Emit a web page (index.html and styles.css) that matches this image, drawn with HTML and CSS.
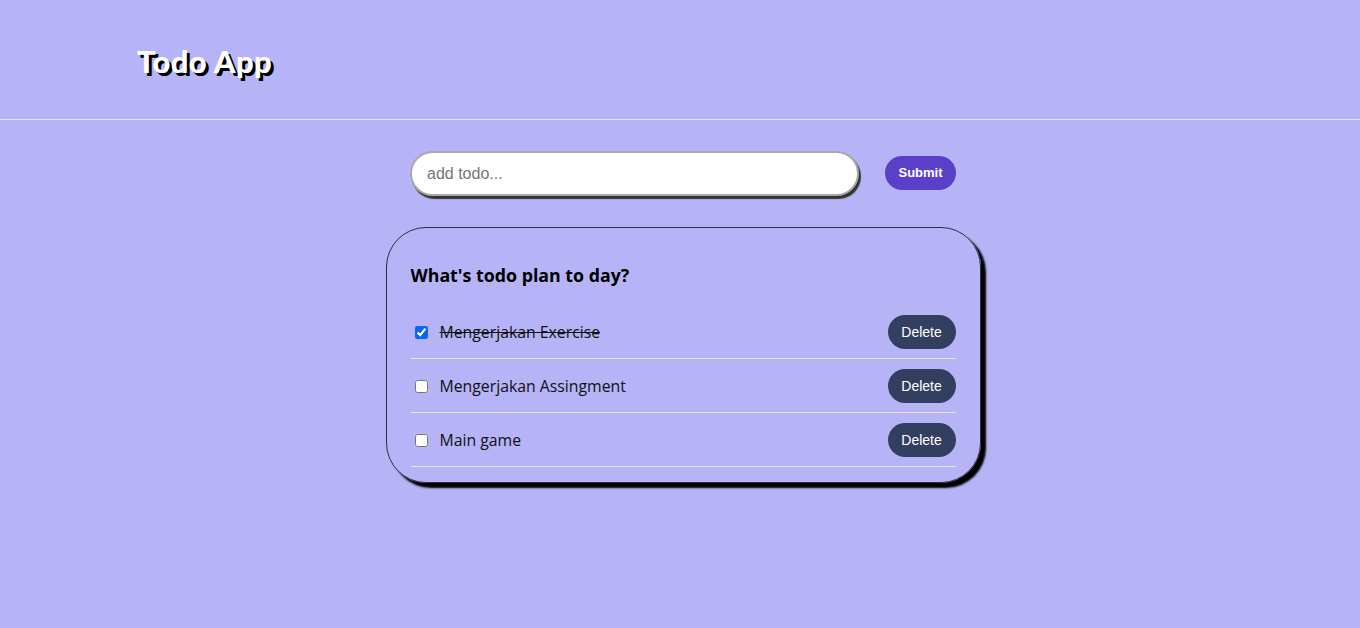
FILE: index.html
```html
<!DOCTYPE html>
<html>
<head>
<meta charset="utf-8">
<link rel="stylesheet" href="styles.css">
</head>
<body>
<header class="header">
  <h1 class="title">Todo App</h1>
</header>
<main class="main">
  <form class="add-form">
    <input class="add-input" type="text" placeholder="add todo...">
    <button class="submit-btn" type="button">Submit</button>
  </form>
  <section class="card">
    <h2 class="card-title">What's todo plan to day?</h2>
    <ul class="todo-list">
      <li class="todo-item">
        <input class="todo-check" type="checkbox" checked>
        <span class="todo-text done">Mengerjakan Exercise</span>
        <button class="delete-btn" type="button">Delete</button>
      </li>
      <li class="todo-item">
        <input class="todo-check" type="checkbox">
        <span class="todo-text">Mengerjakan Assingment</span>
        <button class="delete-btn" type="button">Delete</button>
      </li>
      <li class="todo-item">
        <input class="todo-check" type="checkbox">
        <span class="todo-text">Main game</span>
        <button class="delete-btn" type="button">Delete</button>
      </li>
    </ul>
  </section>
</main>
</body>
</html>
```
FILE: styles.css
```css
html, body {
  margin: 0;
  padding: 0;
  background: #b6b3f6;
  height: 100%;
}
body {
  font-family: "Open Sans", "Noto Sans", sans-serif;
  color: #111;
}
.header {
  height: 120px;
  border-bottom: 1px solid #e4e2f0;
  display: flex;
  align-items: center;
  padding-left: 137px;
  box-sizing: border-box;
}
.title {
  margin: 0;
  font-family: Lato, sans-serif;
  font-weight: 900;
  font-size: 31px;
  color: #fff;
  text-shadow: 3px 3px 0 #000;
  position: relative;
  top: 1px;
  letter-spacing: 0.4px;
}
.main {
  display: flex;
  flex-direction: column;
  align-items: center;
}
.add-form {
  display: flex;
  align-items: center;
  margin-top: 31px;
  margin-left: 6px;
  gap: 26px;
}
.add-input {
  width: 449px;
  height: 45px;
  box-sizing: border-box;
  border: 2px solid #a9a9a9;
  border-radius: 23px;
  padding: 0 15px;
  font-family: "Liberation Sans", Arial, sans-serif;
  font-size: 16px;
  background: #fff;
  box-shadow: 2px 3px 1px #333;
  outline: none;
}
.add-input::placeholder {
  color: #757575;
}
.submit-btn {
  width: 71px;
  height: 34px;
  border: none;
  border-radius: 17px;
  background: #5c3fc8;
  color: #fff;
  font-family: "Liberation Sans", Arial, sans-serif;
  font-size: 13px;
  font-weight: bold;
  margin-top: -2px;
}
.card {
  margin-top: 31px;
  margin-left: 6px;
  width: 595px;
  box-sizing: border-box;
  border: 1px solid #2e2e3e;
  border-radius: 40px;
  padding: 35px 24px 15px 24px;
  box-shadow: 5px 5px 2px #000;
}
.card-title {
  margin: 0 0 18px 0;
  font-family: "Open Sans", sans-serif;
  font-size: 17.8px;
  font-weight: 700;
  color: #000;
}
.todo-list {
  list-style: none;
  margin: 0;
  padding: 0;
}
.todo-item {
  display: flex;
  align-items: center;
  height: 54px;
  border-bottom: 1px solid #e6e4f2;
  box-sizing: border-box;
  padding-top: 1px;
}
.todo-check {
  width: 13px;
  height: 13px;
  margin: 0 12px 0 4px;
  accent-color: #0b67f0;
}
.todo-text {
  flex: 1;
  font-size: 15.8px;
  color: #111;
}
.todo-text.done {
  text-decoration: line-through;
}
.delete-btn {
  width: 68px;
  height: 34px;
  border: none;
  border-radius: 17px;
  background: #333f60;
  color: #fff;
  font-family: "Liberation Sans", Arial, sans-serif;
  font-size: 14px;
}
```
